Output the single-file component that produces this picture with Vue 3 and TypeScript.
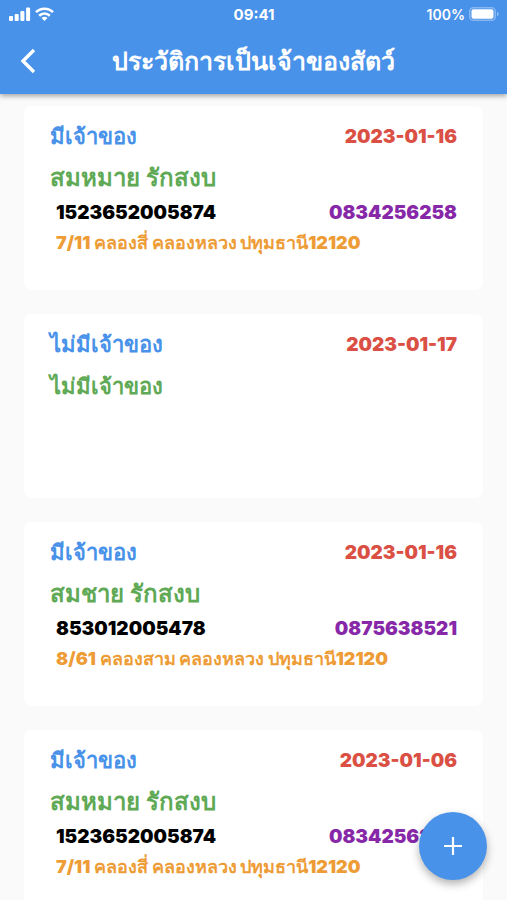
<script setup lang="ts">
interface OwnerRecord {
  id: number
  status: string
  date: string
  name: string
  citizenId?: string
  phone?: string
  address?: string
}

const records: OwnerRecord[] = [
  {
    id: 1,
    status: 'มีเจ้าของ',
    date: '2023-01-16',
    name: 'สมหมาย รักสงบ',
    citizenId: '1523652005874',
    phone: '0834256258',
    address: '7/11 คลองสี่ คลองหลวง ปทุมธานี12120',
  },
  { id: 2, status: 'ไม่มีเจ้าของ', date: '2023-01-17', name: 'ไม่มีเจ้าของ' },
  {
    id: 3,
    status: 'มีเจ้าของ',
    date: '2023-01-16',
    name: 'สมชาย รักสงบ',
    citizenId: '853012005478',
    phone: '0875638521',
    address: '8/61 คลองสาม คลองหลวง ปทุมธานี12120',
  },
  {
    id: 4,
    status: 'มีเจ้าของ',
    date: '2023-01-06',
    name: 'สมหมาย รักสงบ',
    citizenId: '1523652005874',
    phone: '0834256258',
    address: '7/11 คลองสี่ คลองหลวง ปทุมธานี12120',
  },
]
</script>

<template>
  <div class="screen">
    <header class="top">
      <div class="status-bar">
        <div class="signals">
          <svg width="22" height="14" viewBox="0 0 22 14" fill="currentColor" aria-hidden="true">
            <rect x="0" y="9" width="4" height="5" rx="1" />
            <rect x="5.7" y="7" width="4" height="7" rx="1" />
            <rect x="11.4" y="4" width="4" height="10" rx="1" />
            <rect x="17.1" y="0.6" width="4" height="13.4" rx="1" />
          </svg>
          <svg width="19" height="14" viewBox="0 0 19 14" aria-hidden="true">
            <g fill="none" stroke="currentColor" stroke-width="2.6">
              <path d="M1 5.2C5.600.500 13.400.500 18 5.200" />
              <path d="M4.200 8.700C7.200 5.800 11.800 5.800 14.800 8.700" />
            </g>
            <path d="M6.500 10.900C8.200 9.400 10.800 9.400 12.500 10.900L9.500 13.900Z" fill="currentColor" />
          </svg>
        </div>
        <span class="clock">09:41</span>
        <div class="power">
          <span>100%</span>
          <svg width="30" height="14" viewBox="0 0 30 14" aria-hidden="true">
            <rect x=".75" y=".75" width="25.500" height="12.500" rx="3.600" fill="none" stroke="#fff" stroke-opacity=".35" stroke-width="1.500" />
            <rect x="2.500" y="2.300" width="22" height="9.400" rx="2" fill="#fff" />
            <path d="M28 4.800Q29.700 5.300 29.700 7T28 9.200Z" fill="#fff" fill-opacity=".4" />
          </svg>
        </div>
      </div>
      <div class="app-bar">
        <button class="back" type="button" aria-label="ย้อนกลับ">
          <svg width="16" height="26" viewBox="0 0 16 26" fill="none" stroke="currentColor" stroke-width="3.400" aria-hidden="true">
            <path d="M14 2 3 13 14 24" />
          </svg>
        </button>
        <h1>ประวัติการเป็นเจ้าของสัตว์</h1>
      </div>
    </header>

    <main class="list">
      <article v-for="record in records" :key="record.id" class="card">
        <div class="row heading">
          <h2>{{ record.status }}</h2>
          <time class="number date" :datetime="record.date">{{ record.date }}</time>
        </div>
        <p class="name" :class="{ unowned: !record.citizenId }">{{ record.name }}</p>
        <template v-if="record.citizenId">
          <div class="row contact">
            <span class="number">{{ record.citizenId }}</span>
            <span class="number phone">{{ record.phone }}</span>
          </div>
          <p class="address">{{ record.address }}</p>
        </template>
      </article>
    </main>

    <button class="add" type="button" aria-label="เพิ่ม">
      <svg width="18" height="18" viewBox="0 0 18 18" stroke="currentColor" stroke-width="2.200" aria-hidden="true">
        <path d="M9 0V18M0 9H18" />
      </svg>
    </button>
  </div>
</template>

<style>
body {
  background: #fafafa;
}
</style>

<style scoped>
.screen {
  height: 100vh;
  display: flex;
  flex-direction: column;
  overflow: hidden;
  background: #fafafa;
  color: #000;
  font-family: Inter, sans-serif;
}

h1,
h2,
p {
  margin: 0;
}

button {
  display: grid;
  place-items: center;
  padding: 0;
  border: 0;
  color: #fff;
  cursor: pointer;
}

.top {
  flex: none;
  z-index: 1;
  background: #4992e9;
  color: #fff;
  box-shadow: 0 2px 5px rgba(0, 0, 0, 0.35);
}

.status-bar {
  display: grid;
  grid-template-columns: 1fr auto 1fr;
  align-items: center;
  height: 28px;
  padding: 0 8px 0 9px;
  font-size: 15px;
}

.signals,
.power {
  display: flex;
  align-items: center;
  gap: 4px;
}

.power {
  justify-content: flex-end;
  font-size: 14px;
  font-weight: 600;
}

.clock {
  font-weight: 700;
}

.app-bar {
  display: grid;
  grid-template-columns: 56px 1fr 56px;
  align-items: center;
  height: 66px;
}

.back {
  height: 56px;
  background: none;
}

h1 {
  font-size: 25px;
  font-weight: 700;
  line-height: 40px;
  text-align: center;
  white-space: nowrap;
}

.list {
  flex: 1;
  min-height: 0;
  overflow: hidden;
  display: flex;
  flex-direction: column;
  gap: 24px;
  padding: 12px 24px;
}

.card {
  flex: none;
  box-sizing: border-box;
  min-height: 184px;
  padding: 10px 26px;
  border-radius: 8px;
  background: #fff;
}

.row {
  display: flex;
  align-items: center;
  justify-content: space-between;
}

.heading {
  height: 40px;
}

h2 {
  color: #4992e9;
  font-size: 22px;
  font-weight: 700;
}

.number {
  font-size: 19px;
  font-weight: 900;
}

.date {
  color: #db5044;
}

.name {
  color: #60a956;
  font-size: 24px;
  font-weight: 700;
  line-height: 44px;
}

.name.unowned {
  font-size: 22px;
}

.contact {
  height: 24px;
  padding-left: 6px;
}

.phone {
  color: #8728a8;
}

.address {
  padding-left: 6px;
  color: #ed9c36;
  font-size: 18px;
  font-weight: 900;
  line-height: 38px;
}

.add {
  position: fixed;
  right: 20px;
  bottom: 20px;
  z-index: 2;
  width: 68px;
  height: 68px;
  border-radius: 50%;
  background: #4992e9;
  box-shadow: 0 4px 8px rgba(0, 0, 0, 0.3);
}
</style>
